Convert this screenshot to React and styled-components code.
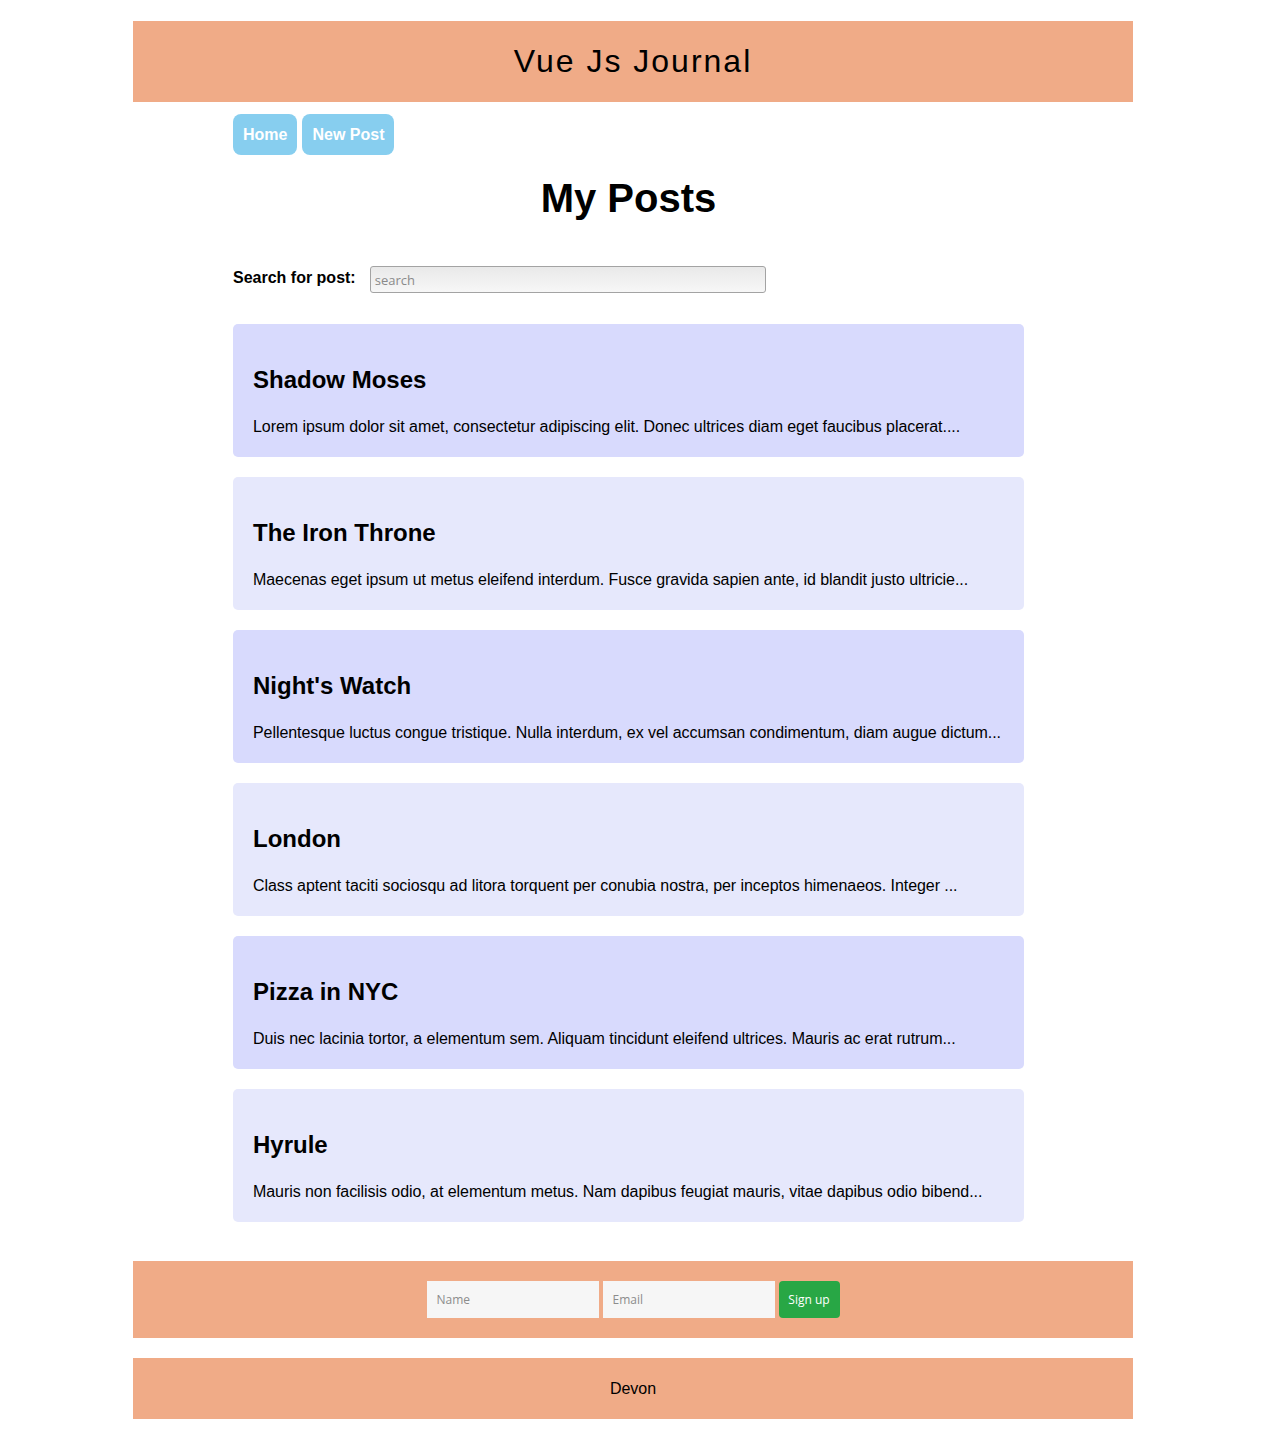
import React from "react";
import styled, { createGlobalStyle } from "styled-components";

const GlobalStyle = createGlobalStyle`
  body {
    margin: 0;
    background: #ffffff;
    font-family: "Liberation Sans", Arial, sans-serif;
    color: #000;
  }
`;

const posts = [
  {
    title: "Shadow Moses",
    body: "Lorem ipsum dolor sit amet, consectetur adipiscing elit. Donec ultrices diam eget faucibus placerat....",
  },
  {
    title: "The Iron Throne",
    body: "Maecenas eget ipsum ut metus eleifend interdum. Fusce gravida sapien ante, id blandit justo ultricie...",
  },
  {
    title: "Night's Watch",
    body: "Pellentesque luctus congue tristique. Nulla interdum, ex vel accumsan condimentum, diam augue dictum...",
  },
  {
    title: "London",
    body: "Class aptent taciti sociosqu ad litora torquent per conubia nostra, per inceptos himenaeos. Integer ...",
  },
  {
    title: "Pizza in NYC",
    body: "Duis nec lacinia tortor, a elementum sem. Aliquam tincidunt eleifend ultrices. Mauris ac erat rutrum...",
  },
  {
    title: "Hyrule",
    body: "Mauris non facilisis odio, at elementum metus. Nam dapibus feugiat mauris, vitae dapibus odio bibend...",
  },
];

export default function App() {
  return (
    <>
      <GlobalStyle />
      <Page>
        <Header>
          <Brand>Vue Js Journal</Brand>
        </Header>
        <Main>
          <Nav>
            <NavButton>Home</NavButton>
            <NavButton>New Post</NavButton>
          </Nav>
          <Title>My Posts</Title>
          <SearchRow>
            <SearchLabel>Search for post:</SearchLabel>
            <SearchInput type="text" placeholder="search" />
          </SearchRow>
          <PostList>
            {posts.map((p, i) => (
              <PostCard key={p.title} $odd={i % 2 === 0}>
                <PostTitle>{p.title}</PostTitle>
                <PostBody>{p.body}</PostBody>
              </PostCard>
            ))}
          </PostList>
        </Main>
        <Signup>
          <SignupInput type="text" placeholder="Name" />
          <SignupInput type="email" placeholder="Email" />
          <SignupButton type="button">Sign up</SignupButton>
        </Signup>
        <Footer>Devon</Footer>
      </Page>
    </>
  );
}

const Page = styled.div`
  width: 1000px;
  margin: 0 auto;
  padding: 21px 0 20px;
  display: flex;
  flex-direction: column;
`;

const Header = styled.header`
  height: 81px;
  background-color: rgb(240, 171, 135);
  display: flex;
  align-items: center;
  justify-content: center;
`;

const Brand = styled.h1`
  margin: 0;
  font-family: "Liberation Sans", Arial, sans-serif;
  font-weight: 400;
  font-size: 32px;
  letter-spacing: 2px;
`;

const Main = styled.main`
  width: 791px;
  margin-left: 100px;
  display: flex;
  flex-direction: column;
`;

const Nav = styled.nav`
  display: flex;
  gap: 5px;
  margin-top: 12px;
`;

const NavButton = styled.a`
  height: 41px;
  padding: 0 10px;
  display: flex;
  align-items: center;
  background-color: rgb(135, 206, 239);
  border-radius: 8px;
  color: #fff;
  font-weight: 700;
  font-size: 16px;
  cursor: pointer;
`;

const Title = styled.h2`
  margin: 20px 0 0;
  text-align: center;
  font-size: 40px;
  font-weight: 700;
  line-height: 46px;
`;

const SearchRow = styled.div`
  display: flex;
  align-items: center;
  margin-top: 45px;
  height: 27px;
`;

const SearchLabel = styled.label`
  font-weight: 700;
  font-size: 16px;
  margin-right: 14px;
  margin-top: -4px;
`;

const SearchInput = styled.input`
  box-sizing: border-box;
  width: 396px;
  height: 27px;
  padding: 0 4px;
  border: 1px solid #a3a3a3;
  border-radius: 3px;
  background: linear-gradient(#e9e9e9, #f7f7f7);
  font-family: "Open Sans", sans-serif;
  font-size: 13px;
  &::placeholder {
    color: #8a8a8a;
  }
`;

const PostList = styled.div`
  display: flex;
  flex-direction: column;
  gap: 20px;
  margin-top: 31px;
`;

const PostCard = styled.article`
  height: 133px;
  box-sizing: border-box;
  padding: 20px 20px 0;
  border-radius: 5px;
  background-color: ${(p) => (p.$odd ? "rgb(216, 218, 253)" : "rgb(230, 232, 252)")};
`;

const PostTitle = styled.h3`
  margin: 22px 0 0;
  font-size: 24px;
  font-weight: 700;
  line-height: 28px;
`;

const PostBody = styled.p`
  margin: 24px 0 0;
  font-size: 16px;
  line-height: 18px;
  letter-spacing: -0.06px;
  white-space: nowrap;
`;

const Signup = styled.section`
  margin-top: 39px;
  height: 77px;
  background-color: rgb(240, 171, 135);
  display: flex;
  align-items: center;
  justify-content: center;
  gap: 4px;
`;

const SignupInput = styled.input`
  box-sizing: border-box;
  width: 172px;
  height: 37px;
  padding: 0 10px;
  border: none;
  background: #f6f6f6;
  font-family: "Open Sans", sans-serif;
  font-size: 12px;
  &::placeholder {
    color: #8c8c8c;
  }
`;

const SignupButton = styled.button`
  box-sizing: border-box;
  width: 61px;
  height: 37px;
  border: none;
  border-radius: 4px;
  background: #28a745;
  color: #fff;
  font-family: "Open Sans", sans-serif;
  font-size: 12px;
  padding: 0;
`;

const Footer = styled.footer`
  margin-top: 20px;
  height: 61px;
  background-color: rgb(240, 171, 135);
  display: flex;
  align-items: center;
  justify-content: center;
  font-size: 16px;
`;
